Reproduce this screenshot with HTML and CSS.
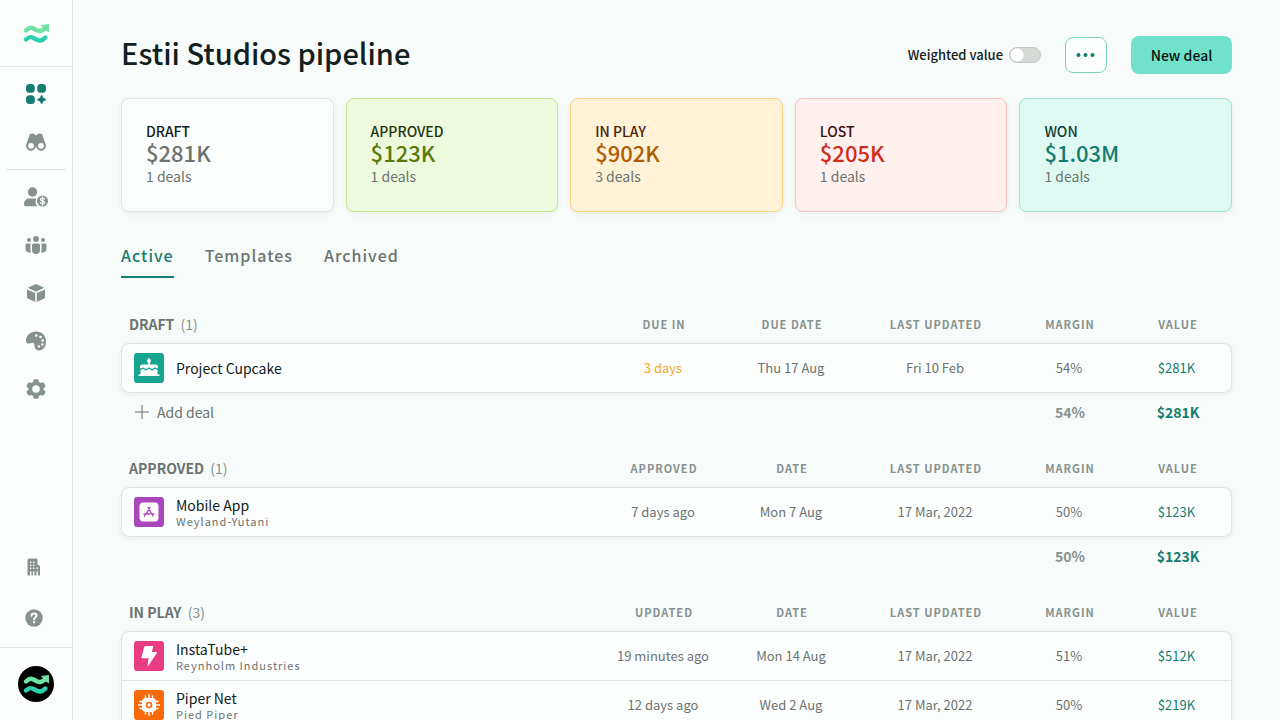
FILE: index.html
```html
<!DOCTYPE html>
<html lang="en">
<head>
<meta charset="utf-8">
<title>Estii Studios pipeline</title>
<meta name="viewport" content="width=device-width, initial-scale=1">
<link rel="stylesheet" href="styles.css">
</head>
<body>
<svg class="defs" aria-hidden="true">
  <symbol id="logo" viewBox="-1 -1 26 20">
    <path d="M2 6.500C4 4.500 6 3 8.500 4C11 5 13.500 7.500 16.500 7C18 6.700 19.500 5.600 21 4.500" fill="none" stroke="#6fe3a6" stroke-width="4.400" stroke-linecap="round"/>
    <path d="M17 1L25 0V8.500L21 6Z" fill="#6fe3a6"/>
    <path d="M2 15.500C4 13.500 6 12.500 8.500 13.500C11 14.500 13.500 17 16.500 16.500C18.500 16.200 20 15 21.300 13.500" fill="none" stroke="#2bd1ae" stroke-width="4.400" stroke-linecap="round"/>
  </symbol>
</svg>
<div class="app">
  <aside class="sidebar">
    <a class="brand" href="#" aria-label="Estii home"><svg width="26" height="20"><use href="#logo"/></svg></a>
    <nav class="nav" aria-label="Main">
      <a class="nav-item current" href="#" aria-label="Pipeline"><svg width="20" height="20" viewBox="0 0 20 20"><rect width="8.800" height="8.800" rx="3.500"/><rect x="11.200" width="8.800" height="8.800" rx="3.500"/><rect y="11.200" width="8.800" height="8.800" rx="3.500"/><path d="M15.600 11.200c.7 0 .9.500 1.100 1.200.4 1.300.9 1.800 2.200 2.100.7.200 1.100.5 1.100 1.100s-.4.900-1.100 1.100c-1.300.3-1.800.8-2.200 2.100-.2.700-.4 1.200-1.100 1.200s-.9-.5-1.100-1.200c-.4-1.300-.9-1.800-2.200-2.100-.7-.2-1.100-.5-1.100-1.100s.4-.9 1.100-1.100c1.300-.3 1.800-.8 2.200-2.100.2-.7.400-1.200 1.100-1.200Z"/></svg></a>
      <a class="nav-item" href="#" aria-label="Discover"><svg width="20" height="18" viewBox="0 0 20 18"><path fill-rule="evenodd" d="M3.200 3C3.400 1.200 4.300.5 6 .5S8.800 1 9.200 2.200h1.600C11.200 1 12.300.5 14 .5s2.600.7 2.800 2.500L19.400 10.500A4.900 4.900 0 1 1 10.600 14.800 .6.600 0 0 0 9.400 14.800 4.900 4.900 0 1 1 .6 10.500ZM5 9.900a2.900 2.900 0 1 0 0 5.800 2.900 2.900 0 0 0 0-5.800Zm10 0a2.900 2.900 0 1 0 0 5.800 2.900 2.900 0 0 0 0-5.800Z"/></svg></a>
    </nav>
    <nav class="nav nav-lower" aria-label="Resources">
      <a class="nav-item" href="#" aria-label="Rates"><svg width="24" height="20" viewBox="0 0 24 20"><circle cx="8.500" cy="5" r="4.700"/><path d="M5 11.500h7.500A6.500 6.500 0 0 0 13.500 19.300H1.500Q0 19.300 0 17.500C0 14 2 11.500 5 11.500Z"/><circle cx="18.500" cy="14" r="5.500"/><path d="M20.500 12.200c-.5-.7-1.200-1-2-1-1.200 0-2 .5-2 1.400 0 2 4 .8 4 2.800 0 1-.8 1.500-2 1.500-1 0-1.700-.4-2.100-1.100M18.500 10v8" class="cut"/></svg></a>
      <a class="nav-item" href="#" aria-label="Team"><svg width="22" height="18" viewBox="0 0 22 18"><circle cx="11" cy="3" r="2.900"/><circle cx="4" cy="4" r="2.100"/><circle cx="18" cy="4" r="2.100"/><path d="M8.500 7.500h5Q15 7.500 15 9v5a4 4 0 0 1-8 0V9Q7 7.500 8.500 7.500ZM2 7.500h3.800Q5.400 8 5.400 9v5q0 1 .7 2.300C3 17.200.5 15.500.5 12.500V9Q.5 7.500 2 7.500ZM16.200 7.500H20q1.500 0 1.500 1.500v3.500c0 3-2.500 4.700-5.600 3.800q.7-1.300.7-2.300V9q0-1-.4-1.500Z"/></svg></a>
      <a class="nav-item" href="#" aria-label="Products"><svg width="18" height="18" viewBox="0 0 18 18"><path d="M9 0l8.300 3.800L9 7.700.7 3.800ZM0 5.400l8.200 3.700V18L.8 14.500Q0 14.100 0 13.300ZM18 5.400L9.800 9.100V18l7.400-3.500q.8-.4.800-1.200Z"/></svg></a>
      <a class="nav-item" href="#" aria-label="Themes"><svg width="20" height="20" viewBox="0 0 20 20"><path d="M10 .5C16 .5 20 4.500 20 10.500 20 16 17 19.500 13.500 19.500c-3.200 0-4.800-2-5-4.500-.1-2-.6-3.200-2.500-3.200-1 0-2 .8-3.200.8C1 12.600 0 11.400 0 9.500 0 4.500 4.500.5 10 .5Z"/><g class="hole"><circle cx="10.300" cy="4.500" r="1.300"/><circle cx="14.500" cy="6" r="1.300"/><circle cx="16.700" cy="9.500" r="1.300"/><circle cx="16.300" cy="13.500" r="1.300"/><circle cx="13" cy="15.500" r="1.200"/></g></svg></a>
      <a class="nav-item" href="#" aria-label="Settings"><svg width="20" height="20" viewBox="0 0 20 20"><path fill-rule="evenodd" d="M8.400.2h3.200q.7 0 .9.700l.5 2.100 1.500.9 2.100-.6q.7-.2 1.100.4l1.600 2.800q.4.700-.1 1.200L17.600 9.200v1.600l1.600 1.500q.5.500.1 1.200l-1.600 2.800q-.4.600-1.100.4l-2.100-.6-1.500.9-.5 2.100q-.2.700-.9.700H8.400q-.7 0-.9-.7L7 17l-1.500-.9-2.100.6q-.7.200-1.100-.4L.7 13.500q-.4-.7.100-1.200l1.600-1.500V9.200L.8 7.700Q.3 7.200.7 6.500l1.600-2.800q.4-.6 1.100-.4l2.100.6L7 3 7.500.9q.2-.7.9-.7ZM10 6.200a3.800 3.800 0 1 0 0 7.600 3.800 3.800 0 0 0 0-7.600Z"/></svg></a>
    </nav>
    <nav class="nav nav-foot" aria-label="Support">
      <a class="nav-item" href="#" aria-label="Organisation"><svg width="14" height="18" viewBox="0 0 14 18"><path fill-rule="evenodd" d="M2 .5h7q1.500 0 1.500 1.500v4.500L13 8v9.500H.5V2Q.5.500 2 .5ZM3 3.500v1.400h1.400V3.500Zm3 0v1.400h1.400V3.500ZM3 6.500v1.400h1.400V6.500Zm3 0v1.400h1.400V6.500Zm-3 3v1.400h1.400V9.500Zm3 0v1.400h1.400V9.500Zm3.400 0v1.400h1.400V9.500ZM3 13.200v4.300h1.400v-4.300Zm3 0v4.300h1.400v-4.300Zm3.400 0v4.300h1.400v-4.300Z"/></svg></a>
      <a class="nav-item" href="#" aria-label="Help"><svg width="18" height="18" viewBox="0 0 18 18"><circle cx="9" cy="9" r="8.700"/><path class="cut bold" d="M6.500 6.800C6.600 5.200 7.600 4.500 9 4.500s2.500.8 2.500 2.100C11.500 8.300 9 8.500 9 10.600M9 13v.6"/></svg></a>
    </nav>
    <div class="account">
      <button class="avatar" aria-label="Account"><svg width="26" height="20"><use href="#logo"/></svg></button>
    </div>
  </aside>

  <main class="main">
    <header class="page-head">
      <h1>Estii Studios pipeline</h1>
      <div class="actions">
        <label class="switch">Weighted value <input type="checkbox" role="switch"></label>
        <button class="more" aria-label="More options"><svg width="20" height="4" viewBox="0 0 20 4"><circle cx="2.500" cy="2" r="2"/><circle cx="9.500" cy="2" r="2"/><circle cx="16.500" cy="2" r="2"/></svg></button>
        <button class="primary">New deal</button>
      </div>
    </header>

    <section class="stats" aria-label="Totals">
      <div class="stat"><h2>DRAFT</h2><strong>$281K</strong><span>1 deals</span></div>
      <div class="stat approved"><h2>APPROVED</h2><strong>$123K</strong><span>1 deals</span></div>
      <div class="stat in-play"><h2>IN PLAY</h2><strong>$902K</strong><span>3 deals</span></div>
      <div class="stat lost"><h2>LOST</h2><strong>$205K</strong><span>1 deals</span></div>
      <div class="stat won"><h2>WON</h2><strong>$1.03M</strong><span>1 deals</span></div>
    </section>

    <nav class="tabs" aria-label="Views">
      <a class="tab selected" href="#">Active</a>
      <a class="tab" href="#">Templates</a>
      <a class="tab" href="#">Archived</a>
    </nav>

    <table class="deals">
      <colgroup><col><col class="c-date"><col class="c-date"><col class="c-updated"><col class="c-num"><col class="c-num"></colgroup>
      <thead><tr><th class="group">DRAFT <span>(1)</span></th><th>DUE IN</th><th>DUE DATE</th><th>LAST UPDATED</th><th>MARGIN</th><th>VALUE</th></tr></thead>
      <tbody>
        <tr>
          <td><a class="deal" href="#"><span class="tile teal"><svg width="22" height="22" viewBox="0 0 22 22"><path d="M11 .8c1.300 1.300 1.900 2.200 1.900 3.200a1.900 1.900 0 0 1-3.800 0c0-1 .6-1.900 1.900-3.200ZM10.200 5.500h1.600V8h-1.600ZM4.500 7.500h13Q20 7.500 20 10v1.500c-1.500 0-1.500-1-3-1s-1.500 1.500-3 1.500-1.500-1.500-3-1.500-1.500 1.500-3 1.500-1.500-1.500-3-1.500-1.500 1-3 1V10q0-2.500 2.500-2.500ZM2.500 13c1.500 0 1.200-1 2.500-1s1.500 1.500 3 1.500S9.500 12 11 12s1.500 1.500 3 1.500 1.500-1.500 3-1.500 1 1 2.500 1v4.500H21.500V19H.5v-1.500h2Z"/></svg></span><span class="name">Project Cupcake</span></a></td>
          <td class="due">3 days</td><td>Thu 17 Aug</td><td>Fri 10 Feb</td><td>54%</td><td class="value">$281K</td>
        </tr>
      </tbody>
      <tfoot><tr><td><button class="add"><svg width="14" height="14" viewBox="0 0 14 14"><path d="M7 0v14M0 7h14"/></svg>Add deal</button></td><td></td><td></td><td></td><td>54%</td><td class="value">$281K</td></tr></tfoot>
    </table>

    <table class="deals">
      <colgroup><col><col class="c-date"><col class="c-date"><col class="c-updated"><col class="c-num"><col class="c-num"></colgroup>
      <thead><tr><th class="group">APPROVED <span>(1)</span></th><th>APPROVED</th><th>DATE</th><th>LAST UPDATED</th><th>MARGIN</th><th>VALUE</th></tr></thead>
      <tbody>
        <tr>
          <td><a class="deal" href="#"><span class="tile purple"><svg width="22" height="22" viewBox="0 0 22 22"><rect x="1.500" y="1.500" width="19" height="19" rx="4"/><path d="M10 6.500l5 8.500M12 6.500L8 13M6 13h6M14 13h2M6.800 14.600l-.3.500" fill="none" stroke="#ab47bc" stroke-width="1.400" stroke-linecap="round"/></svg></span><span class="name">Mobile App<small>Weyland-Yutani</small></span></a></td>
          <td>7 days ago</td><td>Mon 7 Aug</td><td>17 Mar, 2022</td><td>50%</td><td class="value">$123K</td>
        </tr>
      </tbody>
      <tfoot><tr><td></td><td></td><td></td><td></td><td>50%</td><td class="value">$123K</td></tr></tfoot>
    </table>

    <table class="deals">
      <colgroup><col><col class="c-date"><col class="c-date"><col class="c-updated"><col class="c-num"><col class="c-num"></colgroup>
      <thead><tr><th class="group">IN PLAY <span>(3)</span></th><th>UPDATED</th><th>DATE</th><th>LAST UPDATED</th><th>MARGIN</th><th>VALUE</th></tr></thead>
      <tbody>
        <tr>
          <td><a class="deal" href="#"><span class="tile pink"><svg width="22" height="22" viewBox="0 0 22 22"><path d="M7.500 1h7.200q.8 0 .5.800L13.800 7h4.700q1 0 .4.900L10.500 20.500q-1 1.200-.9-.3l1-7H4.200q-.9 0-.8-.9l2.900-10.500Q6.500 1 7.500 1Z"/></svg></span><span class="name">InstaTube+<small>Reynholm Industries</small></span></a></td>
          <td>19 minutes ago</td><td>Mon 14 Aug</td><td>17 Mar, 2022</td><td>51%</td><td class="value">$512K</td>
        </tr>
        <tr>
          <td><a class="deal" href="#"><span class="tile orange"><svg width="22" height="22" viewBox="0 0 22 22"><path d="M7.500 2v18M11 .5v21M14.500 2v18M2 7.500h18M.5 11h21M2 14.500h18" stroke="#fff" stroke-width="1.400" stroke-linecap="round"/><rect x="4" y="4" width="14" height="14" rx="4"/><circle cx="11" cy="11" r="2.500" fill="none" stroke="#f96a0b" stroke-width="1.600"/></svg></span><span class="name">Piper Net<small>Pied Piper</small></span></a></td>
          <td>12 days ago</td><td>Wed 2 Aug</td><td>17 Mar, 2022</td><td>50%</td><td class="value">$219K</td>
        </tr>
      </tbody>
    </table>
  </main>
</div>
</body>
</html>
```
FILE: styles.css
```css
:root {
  --teal: #147d6f;
  --grey: #6b7370;
  --icon: #87918e;
  --line: #dfe3e1;
  --surface: #fcfefd;
  --page: #f7fbfa;
}
* { box-sizing: border-box; }
body {
  margin: 0;
  background: var(--page);
  color: #12201d;
  font: 14px/18px "Noto Sans CJK SC", "Noto Sans", sans-serif;
}
button { font: inherit; cursor: pointer; }
a { color: inherit; text-decoration: none; }
svg { display: block; fill: currentColor; }
.defs { position: absolute; width: 0; height: 0; }

.app { display: flex; height: 100vh; }

/* Sidebar */
.sidebar {
  flex: none;
  display: flex;
  flex-direction: column;
  width: 73px;
  border-right: 1px solid var(--line);
  background: var(--surface);
}
.brand {
  display: flex;
  align-items: center;
  justify-content: center;
  height: 67px;
  border-bottom: 1px solid var(--line);
}
.nav { display: flex; flex-direction: column; padding-top: 3px; color: var(--icon); }
.nav-item { display: flex; align-items: center; justify-content: center; height: 48px; }
.nav-item.current { color: var(--teal); }
.nav-lower { margin: 3px 6px 0; border-top: 1px solid var(--line); }
.nav-foot { margin-top: auto; padding: 0 4px 5px 0; gap: 3px; }
.cut { fill: none; stroke: var(--surface); stroke-width: 1.300; stroke-linecap: round; }
.cut.bold { stroke-width: 2; }
.hole { fill: var(--surface); }
.account { display: flex; justify-content: center; padding: 18px 0; border-top: 1px solid var(--line); }
.avatar {
  display: grid;
  place-items: center;
  width: 36px;
  height: 36px;
  padding: 0;
  border: 0;
  border-radius: 50%;
  background: #000;
}

/* Page */
.main { flex: 1; min-width: 0; padding: 36px 48px; overflow-y: auto; scrollbar-width: none; }
.page-head { display: flex; align-items: center; justify-content: space-between; height: 38px; }
h1 { align-self: flex-start; margin: 0; font-size: 29px; line-height: 33px; font-weight: 500; }
.actions { display: flex; align-items: center; gap: 24px; }
.switch { display: flex; align-items: center; gap: 6px; font-size: 13px; font-weight: 500; }
.switch input {
  appearance: none;
  width: 32px;
  height: 16px;
  margin: 0;
  border: 1px solid #c3c8c6;
  border-radius: 8px;
  background: radial-gradient(circle at 7px 7px, #fff 6px, transparent 7px) #d5dad7;
}
.more {
  display: grid;
  place-items: center;
  width: 42px;
  height: 36px;
  padding: 0;
  border: 1px solid #7bd5c0;
  border-radius: 8px;
  background: var(--surface);
  color: var(--teal);
}
.primary { min-width: 101px; height: 38px; padding: 0 18px; border: 0; border-radius: 8px; background: #71e2ca; color: #06110f; font-weight: 500; }

/* Totals */
.stats { display: grid; grid-template-columns: repeat(5, 1fr); gap: 12px; margin-top: 24px; }
.stat {
  padding: 23px 24px;
  border: 1px solid var(--line);
  border-radius: 8px;
  background: var(--surface);
  box-shadow: 0 2px 6px rgba(20, 50, 45, .06);
}
.stat h2 { margin: 0; font-size: 14px; line-height: 18px; font-weight: 500; }
.stat strong { display: block; color: var(--grey); font-size: 22px; line-height: 25px; font-weight: 500; }
.stat span { display: block; color: var(--grey); line-height: 23px; }
.approved { border-color: #c3e88d; background: #eefadd; }
.approved h2 { color: #26330d; }
.approved strong { color: #587a0c; }
.in-play { border-color: #fdd285; background: #fff2d6; }
.in-play h2 { color: #4d1f10; }
.in-play strong { color: #b25b05; }
.lost { border-color: #fac3bd; background: #ffefed; }
.lost h2 { color: #3c1010; }
.lost strong { color: #cf2d17; }
.won { border-color: #9fe5d3; background: #dffaf3; }
.won h2 { color: #123a34; }
.won strong { color: var(--teal); }

/* Tabs */
.tabs { display: flex; gap: 31px; margin: 32px 0 27px; color: var(--grey); font-size: 16px; line-height: 22px; font-weight: 500; letter-spacing: 1px; }
.tab { padding-bottom: 10px; border-bottom: 2px solid transparent; }
.tab.selected { border-color: var(--teal); color: var(--teal); }

/* Deals */
.deals { width: 100%; margin-bottom: 18px; table-layout: fixed; border-spacing: 0; }
.c-date { width: 128px; }
.c-updated { width: 160px; }
.c-num { width: 108px; }
th, td { padding: 0; text-align: center; }
th:first-child, td:first-child { text-align: left; }
th { height: 38px; color: var(--icon); font-size: 11px; font-weight: 700; letter-spacing: 1px; }
th.group { padding-left: 8px; color: var(--grey); font-size: 14px; letter-spacing: 0; }
.group span { padding-left: 3px; color: var(--icon); font-weight: 400; }
tbody { border-radius: 8px; box-shadow: 0 2px 6px rgba(20, 50, 45, .06); }
tbody td { height: 49px; padding-right: 2px; border-bottom: 1px solid var(--line); background: var(--surface); color: var(--grey); font-size: 13px; }
tbody tr:first-child td { height: 50px; border-top: 1px solid var(--line); }
tbody td:first-child { border-left: 1px solid var(--line); }
tbody td:last-child { border-right: 1px solid var(--line); }
tbody tr:first-child td:first-child { border-top-left-radius: 8px; }
tbody tr:first-child td:last-child { border-top-right-radius: 8px; }
tbody tr:last-child td:first-child { border-bottom-left-radius: 8px; }
tbody tr:last-child td:last-child { border-bottom-right-radius: 8px; }
tbody .due { color: #f9a51f; }
tbody .value, tfoot .value { color: var(--teal); }
tfoot td { height: 38px; color: var(--icon); font-weight: 700; }
.deal { display: flex; align-items: center; gap: 12px; padding-left: 12px; }
.tile { display: grid; place-items: center; width: 30px; height: 30px; border-radius: 3px; color: #fff; }
.teal { background: #17a491; }
.purple { background: #ab47bc; }
.pink { background: #ea3c83; }
.orange { background: #f96a0b; }
.name { color: #12201d; font-size: 14px; line-height: 18px; }
.name small { display: block; color: var(--grey); font-size: 11px; line-height: 14px; letter-spacing: 1px; }
.add { display: flex; align-items: center; gap: 8px; padding: 0 0 0 14px; border: 0; background: none; color: var(--grey); font-weight: 400; }
.add path { stroke: currentColor; stroke-width: 1; }
```
